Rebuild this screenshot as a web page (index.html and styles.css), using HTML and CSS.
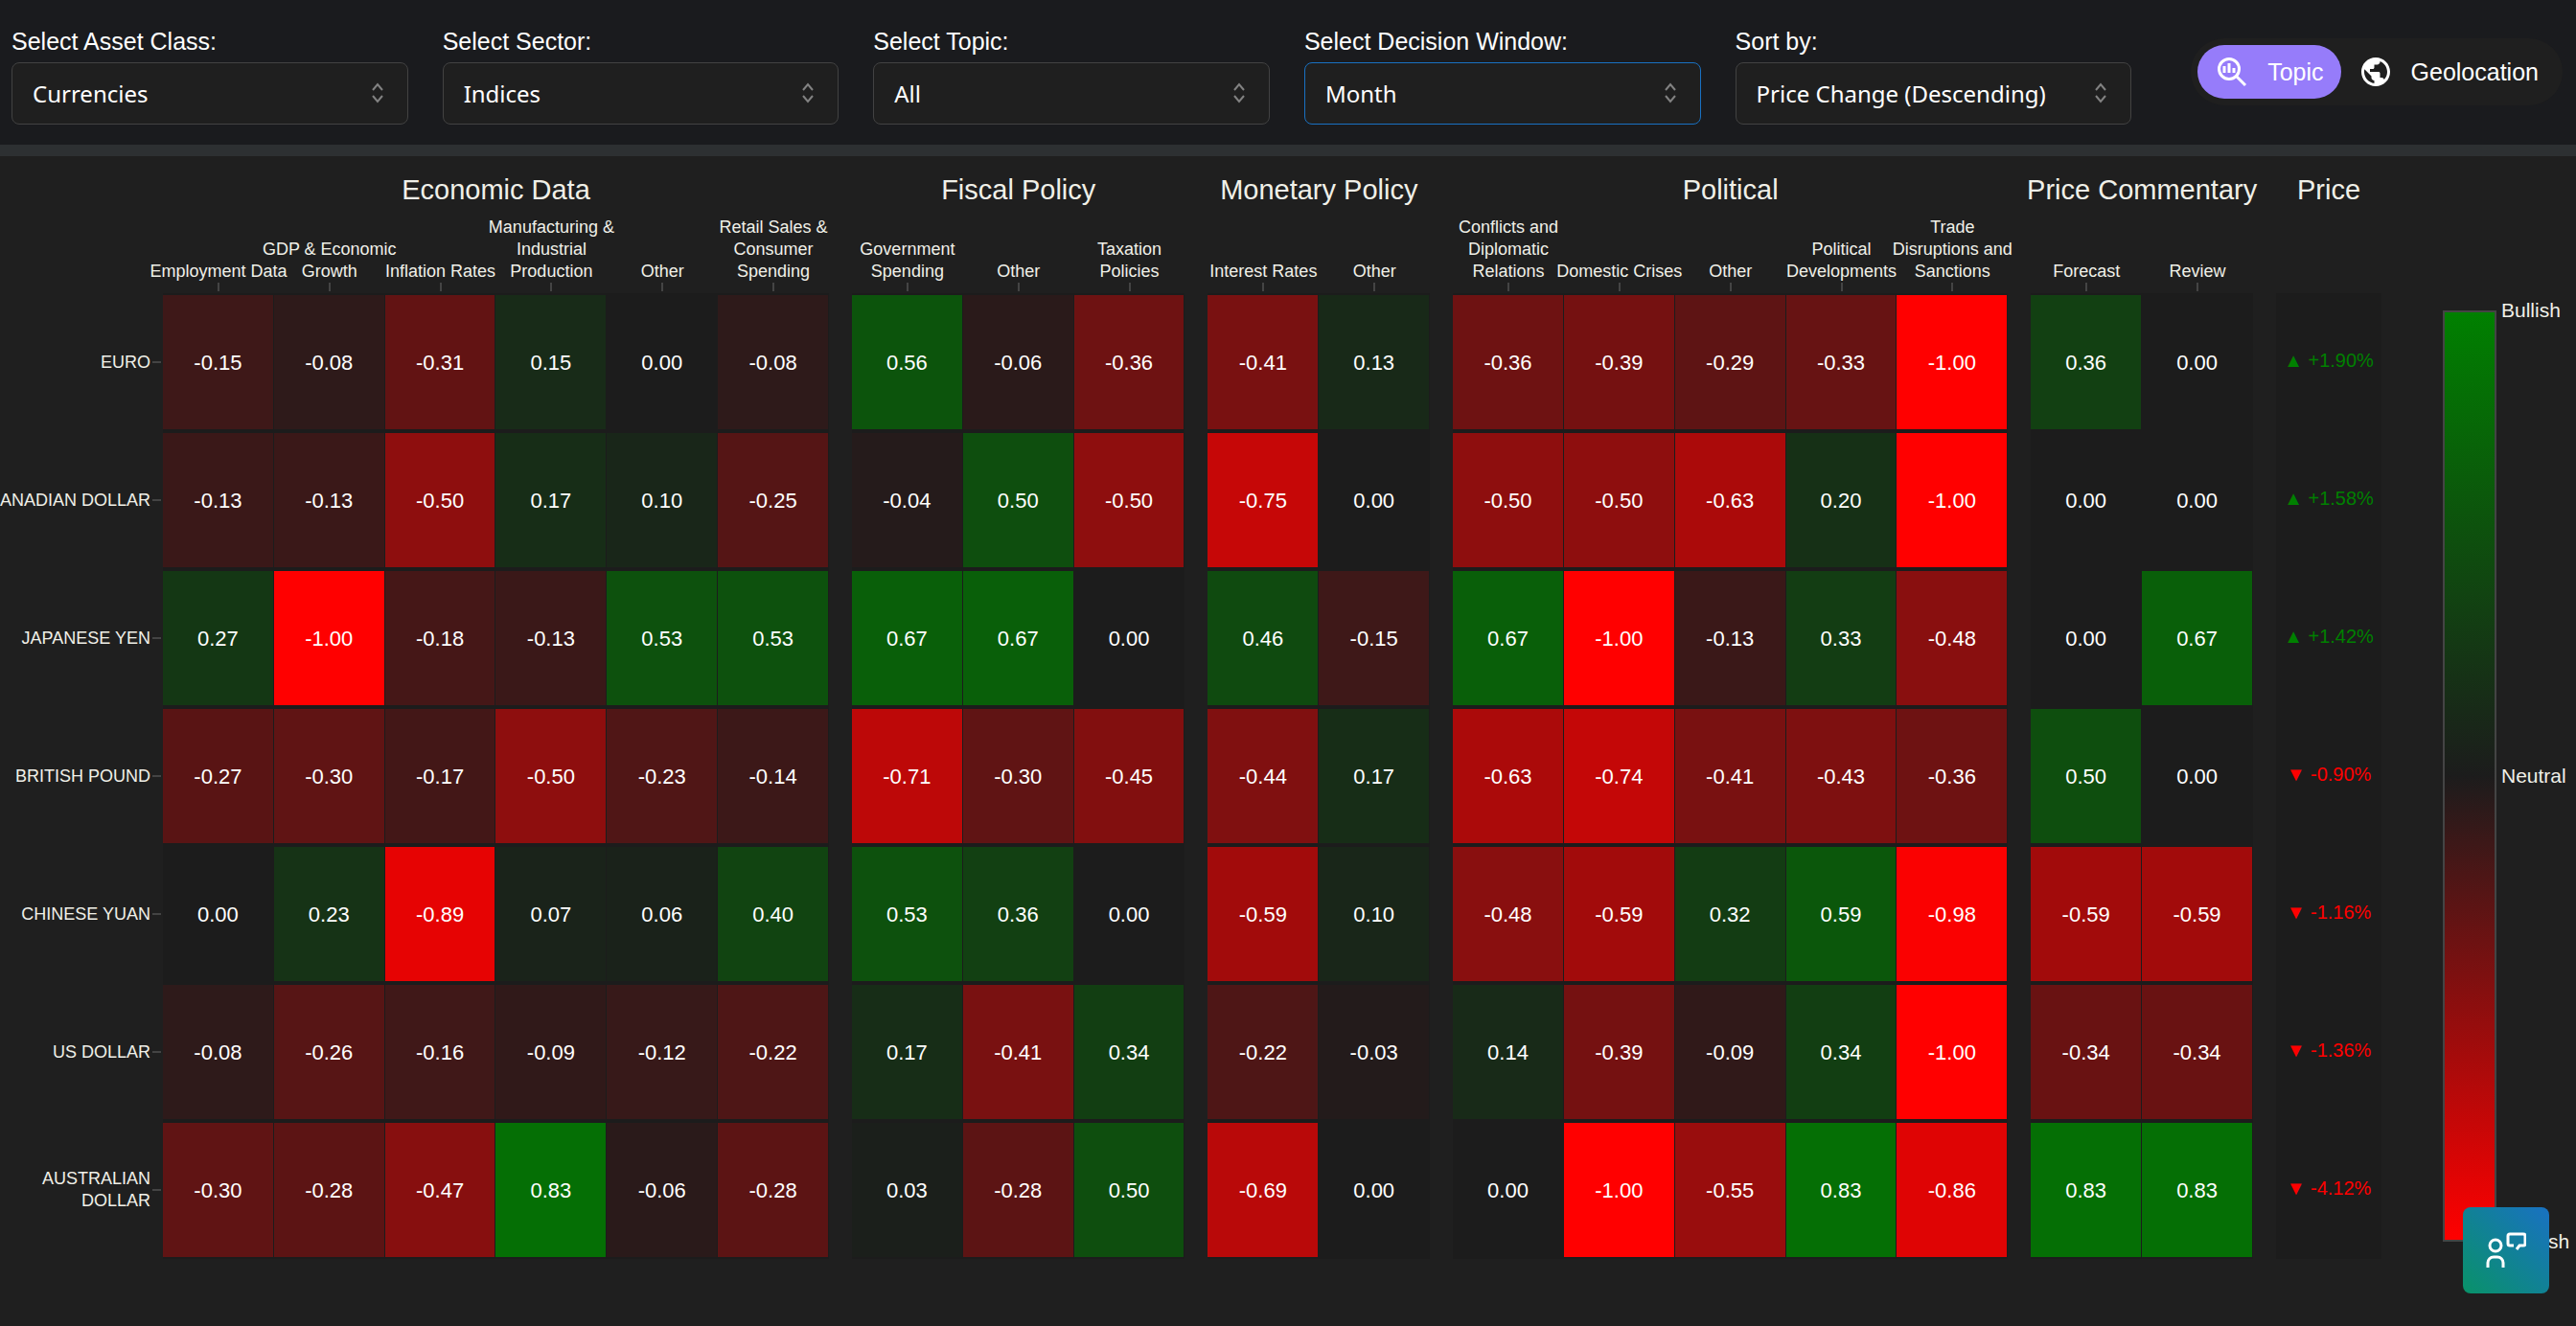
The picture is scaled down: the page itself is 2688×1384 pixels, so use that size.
FILE: index.html
```html
<!DOCTYPE html>
<html lang="en">
<head>
  <meta charset="utf-8">
  <title>Sentiment Heatmap</title>
  <link rel="stylesheet" href="styles.css">
</head>
<body>
  <header class="toolbar">
    <div class="filters">
      <div class="field">
        <label for="assetClass">Select Asset Class:</label>
        <div class="select-box">
          <select id="assetClass"><option>Currencies</option></select>
          <svg class="chevrons" viewBox="0 0 14 22"><path d="M2 8l5-6 5 6M2 14l5 6 5-6"/></svg>
        </div>
      </div>
      <div class="field">
        <label for="sector">Select Sector:</label>
        <div class="select-box">
          <select id="sector"><option>Indices</option></select>
          <svg class="chevrons" viewBox="0 0 14 22"><path d="M2 8l5-6 5 6M2 14l5 6 5-6"/></svg>
        </div>
      </div>
      <div class="field">
        <label for="topic">Select Topic:</label>
        <div class="select-box">
          <select id="topic"><option>All</option></select>
          <svg class="chevrons" viewBox="0 0 14 22"><path d="M2 8l5-6 5 6M2 14l5 6 5-6"/></svg>
        </div>
      </div>
      <div class="field">
        <label for="decisionWindow">Select Decision Window:</label>
        <div class="select-box">
          <select id="decisionWindow" class="active"><option>Month</option></select>
          <svg class="chevrons" viewBox="0 0 14 22"><path d="M2 8l5-6 5 6M2 14l5 6 5-6"/></svg>
        </div>
      </div>
      <div class="field">
        <label for="sortBy">Sort by:</label>
        <div class="select-box">
          <select id="sortBy"><option>Price Change (Descending)</option></select>
          <svg class="chevrons" viewBox="0 0 14 22"><path d="M2 8l5-6 5 6M2 14l5 6 5-6"/></svg>
        </div>
      </div>
    </div>
    <div class="view-toggle">
      <button class="view-button selected" type="button">
        <svg class="view-icon" viewBox="0 0 36 36">
          <circle cx="15" cy="15" r="10.5" fill="none" stroke="currentColor" stroke-width="3"/>
          <path d="M22.500 22.500L32 32" stroke="currentColor" stroke-width="3"/>
          <path d="M10 12v7M15 9v10M20 14v5" stroke="currentColor" stroke-width="3"/>
        </svg>
        Topic
      </button>
      <button class="view-button" type="button">
        <svg class="view-icon" viewBox="0 0 24 24"><path fill="currentColor" d="M12 2C6.480 2 2 6.480 2 12s4.480 10 10 10 10-4.480 10-10S17.520 2 12 2zm-1 17.930c-3.950-.49-7-3.850-7-7.930 0-.62.08-1.210.21-1.790L9 15v1c0 1.100.9 2 2 2v1.930zm6.900-2.540c-.26-.81-1-1.390-1.900-1.390h-1v-3c0-.55-.45-1-1-1H8v-2h2c.55 0 1-.45 1-1V7h2c1.100 0 2-.9 2-2v-.41c2.930 1.190 5 4.060 5 7.410 0 2.080-.8 3.970-2.100 5.390z"/></svg>
        Geolocation
      </button>
    </div>
  </header>

  <main class="board">
    <table class="heatmap">
      <colgroup id="columns"></colgroup>
      <thead>
        <tr id="groupRow"></tr>
        <tr id="topicRow"></tr>
      </thead>
      <tbody id="rows"></tbody>
    </table>
    <div class="legend">
      <div class="legend-bar"></div>
      <div class="legend-labels">
        <span>Bullish</span>
        <span>Neutral</span>
        <span>Bearish</span>
      </div>
    </div>
  </main>

  <button class="feedback" type="button" aria-label="Feedback">
    <svg viewBox="0 0 42 38">
      <circle cx="10" cy="14" r="6"/>
      <path d="M2 37v-5a6 6 0 0 1 6-6h4a6 6 0 0 1 6 6v5"/>
      <path d="M29 14h-4a2 2 0 0 1-2-2V4a2 2 0 0 1 2-2h14a2 2 0 0 1 2 2v8a2 2 0 0 1-2 2h-4l-3 4"/>
    </svg>
  </button>
  <script src="script.js"></script>
</body>
</html>
```
FILE: styles.css
```css
* {
  box-sizing: border-box;
}
body {
  margin: 0;
  min-height: 100vh;
  background-color: #1f1f1f;
  color: #fff;
  font-family: "Liberation Sans", Arial, sans-serif;
  overflow-x: hidden;
}

/* Filters and view switch */
.toolbar {
  display: flex;
  align-items: flex-start;
  gap: 62px;
  padding: 28px 14px 21px 12px;
  background-color: #1a1b1e;
}
.filters {
  flex: 1;
  display: grid;
  grid-template-columns: repeat(5, 1fr);
  gap: 36px;
}
.field label {
  display: block;
  font-size: 25px;
  line-height: 30px;
  margin-bottom: 7px;
}
.select-box {
  position: relative;
}
.select-box select {
  display: block;
  width: 100%;
  height: 65px;
  padding: 0 21px;
  appearance: none;
  background-color: #1f1f1f;
  border: 1px solid #424242;
  border-radius: 8px;
  color: #fff;
  font-family: "Noto Sans", sans-serif;
  font-size: 24px;
}
.select-box select.active {
  border-color: #1971c2;
}
.chevrons {
  position: absolute;
  top: 21px;
  right: 25px;
  width: 14px;
  height: 22px;
  fill: none;
  stroke: #828282;
  stroke-width: 2;
  pointer-events: none;
}
.view-toggle {
  display: flex;
  margin-top: 12px;
  padding: 7px;
  background-color: #1f1f1f;
  border-radius: 35px;
}
.view-button {
  display: flex;
  align-items: center;
  gap: 19px;
  height: 56px;
  padding: 0 18px;
  background: none;
  border: none;
  border-radius: 28px;
  color: #fff;
  font-family: inherit;
  font-size: 25px;
  cursor: pointer;
}
.view-button.selected {
  background-color: #967cfa;
}
.view-icon {
  width: 36px;
  height: 36px;
}

/* Heatmap */
.board {
  display: flex;
  border-top: 12px solid #2d3032;
}
.heatmap {
  flex: 1;
  width: 100%;
  table-layout: fixed;
  border-collapse: separate;
  border-spacing: 0;
  color: #f0f0e8;
  font-size: 18px;
  line-height: 23px;
}
.heatmap th,
.heatmap td {
  padding: 0;
  font-weight: normal;
}
.col-name {
  width: 170px;
}
.col-gap {
  width: 24px;
}
.col-price {
  width: 110px;
}
.group-title,
.topic-title,
.row-name {
  display: flex;
  justify-content: center;
  text-align: center;
  white-space: nowrap;
}
.group-title {
  height: 55px;
  align-items: flex-end;
  font-size: 29px;
  line-height: 40px;
}
.topic-title {
  height: 88px;
  flex-direction: column;
  justify-content: flex-end;
  align-items: center;
}
.topic-title::after {
  content: "";
  width: 2px;
  height: 9px;
  margin-bottom: 2px;
  background-color: #444;
}
.row-name {
  justify-content: flex-end;
  align-items: center;
  gap: 2px;
  padding-right: 2px;
  text-align: right;
}
.row-name::after {
  content: "";
  flex: none;
  width: 9px;
  height: 2px;
  background-color: #444;
}
.heatmap tbody tr {
  height: 144px;
}
.score {
  border: solid #1c1c1c;
  border-width: 2px 1px 2px 0;
  color: #fff;
  font-size: 22px;
  text-align: center;
}
.heatmap .price {
  padding-bottom: 4px;
  background-color: #1c1c1c;
  font-size: 20px;
  text-align: center;
  white-space: nowrap;
}
.up {
  color: green;
}
.down {
  color: red;
}

/* Colour scale */
.legend {
  flex: none;
  display: flex;
  gap: 5px;
  width: 203px;
  padding: 149px 0 6px 64px;
}
.legend-bar {
  width: 56px;
  margin: 12px 0;
  border: 2px solid #444;
  background: linear-gradient(green, #1c1c1c, red);
}
.legend-labels {
  display: flex;
  flex-direction: column;
  justify-content: space-between;
  color: #f0f0e8;
  font-size: 21px;
  line-height: 24px;
}

.feedback {
  position: fixed;
  right: 28px;
  bottom: 34px;
  display: flex;
  align-items: center;
  justify-content: center;
  width: 90px;
  height: 90px;
  border: none;
  border-radius: 8px;
  background: linear-gradient(45deg, #099268, #1971c2);
  cursor: pointer;
}
.feedback svg {
  width: 42px;
  height: 38px;
  fill: none;
  stroke: #fff;
  stroke-width: 3;
}
```
FILE: script.js
```js
const groups = [
  { name: "Economic Data", topics: ["Employment Data", "GDP & Economic|Growth", "Inflation Rates", "Manufacturing &|Industrial|Production", "Other", "Retail Sales &|Consumer|Spending"] },
  { name: "Fiscal Policy", topics: ["Government|Spending", "Other", "Taxation|Policies"] },
  { name: "Monetary Policy", topics: ["Interest Rates", "Other"] },
  { name: "Political", topics: ["Conflicts and|Diplomatic|Relations", "Domestic Crises", "Other", "Political|Developments", "Trade|Disruptions and|Sanctions"] },
  { name: "Price Commentary", topics: ["Forecast", "Review"] },
];

const currencies = [
  { name: "EURO", price: 1.90, scores: [-0.15, -0.08, -0.31, 0.15, 0, -0.08, 0.56, -0.06, -0.36, -0.41, 0.13, -0.36, -0.39, -0.29, -0.33, -1, 0.36, 0] },
  { name: "CANADIAN DOLLAR", price: 1.58, scores: [-0.13, -0.13, -0.50, 0.17, 0.10, -0.25, -0.04, 0.50, -0.50, -0.75, 0, -0.50, -0.50, -0.63, 0.20, -1, 0, 0] },
  { name: "JAPANESE YEN", price: 1.42, scores: [0.27, -1, -0.18, -0.13, 0.53, 0.53, 0.67, 0.67, 0, 0.46, -0.15, 0.67, -1, -0.13, 0.33, -0.48, 0, 0.67] },
  { name: "BRITISH POUND", price: -0.90, scores: [-0.27, -0.30, -0.17, -0.50, -0.23, -0.14, -0.71, -0.30, -0.45, -0.44, 0.17, -0.63, -0.74, -0.41, -0.43, -0.36, 0.50, 0] },
  { name: "CHINESE YUAN", price: -1.16, scores: [0, 0.23, -0.89, 0.07, 0.06, 0.40, 0.53, 0.36, 0, -0.59, 0.10, -0.48, -0.59, 0.32, 0.59, -0.98, -0.59, -0.59] },
  { name: "US DOLLAR", price: -1.36, scores: [-0.08, -0.26, -0.16, -0.09, -0.12, -0.22, 0.17, -0.41, 0.34, -0.22, -0.03, 0.14, -0.39, -0.09, 0.34, -1, -0.34, -0.34] },
  { name: "AUSTRALIAN|DOLLAR", price: -4.12, scores: [-0.30, -0.28, -0.47, 0.83, -0.06, -0.28, 0.03, -0.28, 0.50, -0.69, 0, 0, -1, -0.55, 0.83, -0.86, 0.83, 0.83] },
];

// Blend from the neutral grey to full red or full green
function scoreColor(score) {
  const end = score < 0 ? [255, 0, 0] : [0, 128, 0];
  const parts = end.map((c) => Math.round(28 + (c - 28) * Math.abs(score)));
  return `rgb(${parts.join(", ")})`;
}

function lines(text) {
  return text.replaceAll("&", "&amp;").replaceAll("|", "<br>");
}

let columns = `<col class="col-name">`;
let groupRow = `<td></td>`;
let topicRow = `<td></td>`;
for (const group of groups) {
  columns += `<col>`.repeat(group.topics.length) + `<col class="col-gap">`;
  groupRow += `<th colspan="${group.topics.length}" scope="colgroup"><div class="group-title"><span>${group.name}</span></div></th><td></td>`;
  for (const topic of group.topics) {
    topicRow += `<th scope="col"><div class="topic-title"><span>${lines(topic)}</span></div></th>`;
  }
  topicRow += `<td></td>`;
}
columns += `<col class="col-price">`;
groupRow += `<th scope="col"><div class="group-title"><span>Price</span></div></th>`;
topicRow += `<td></td>`;

let rows = "";
for (const { name, price, scores } of currencies) {
  let next = 0;
  rows += `<tr><th scope="row"><div class="row-name"><span>${lines(name)}</span></div></th>`;
  for (const group of groups) {
    for (let i = 0; i < group.topics.length; i++) {
      const score = scores[next++];
      rows += `<td class="score" style="background-color: ${scoreColor(score)}">${score.toFixed(2)}</td>`;
    }
    rows += `<td></td>`;
  }
  const change = price > 0 ? `▲ +${price.toFixed(2)}%` : `▼ ${price.toFixed(2)}%`;
  rows += `<td class="price ${price > 0 ? "up" : "down"}">${change}</td></tr>`;
}

document.getElementById("columns").innerHTML = columns;
document.getElementById("groupRow").innerHTML = groupRow;
document.getElementById("topicRow").innerHTML = topicRow;
document.getElementById("rows").innerHTML = rows;
```
